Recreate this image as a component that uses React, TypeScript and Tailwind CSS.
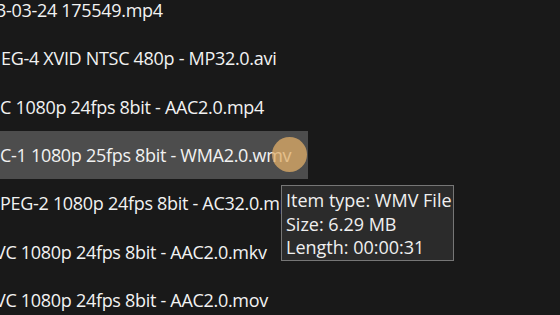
import React from "react";

const rows: { text: string; ml: string; selected?: boolean }[] = [
  { text: "3-03-24 175549.mp4", ml: "-ml-[4px]" },
  { text: "EG-4 XVID NTSC 480p - MP32.0.avi", ml: "ml-[1px]" },
  { text: "C 1080p 24fps 8bit - AAC2.0.mp4", ml: "ml-0" },
  { text: "C-1 1080p 25fps 8bit - WMA2.0.wmv", ml: "ml-0", selected: true },
  { text: "PEG-2 1080p 24fps 8bit - AC32.0.mpg", ml: "ml-0" },
  { text: "VC 1080p 24fps 8bit - AAC2.0.mkv", ml: "-ml-[5px]" },
  { text: "VC 1080p 24fps 8bit - AAC2.0.mov", ml: "-ml-[5px]" },
];

export default function App() {
  return (
    <div
      className="relative w-[560px] h-[315px] overflow-hidden bg-[#191919] text-white"
      style={{ fontFamily: '"Open Sans", "Noto Sans", sans-serif' }}
    >
      <div className="-mt-[14px] flex flex-col">
        {rows.map((r, i) => (
          <div
            key={i}
            className={`h-[48.33px] flex items-center whitespace-nowrap ${
              r.selected ? "w-[308px] bg-[#4d4d4d]" : "w-full"
            }`}
          >
            <span className={`${r.ml} text-[18px] tracking-[-0.3px] leading-none text-[#f2f2f2]`}>{r.text}</span>
          </div>
        ))}
      </div>

      {/* cursor highlight */}
      <div className="absolute left-[272px] top-[137px] w-[35px] h-[35px] rounded-full bg-[#e0ad68]/75" />

      {/* tooltip */}
      <div className="absolute left-[281px] top-[185px] w-[173px] h-[76px] border border-[#767676] bg-[#2b2b2b] pl-[4px] pt-[3px] text-[18px] leading-[23.5px] text-[#f0f0f0] whitespace-nowrap">
        <div>Item type: WMV File</div>
        <div>Size: 6.29 MB</div>
        <div>Length: 00:00:31</div>
      </div>
    </div>
  );
}
